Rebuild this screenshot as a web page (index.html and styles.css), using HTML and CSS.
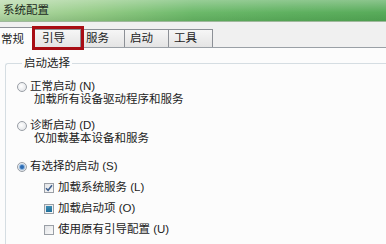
FILE: index.html
```html
<!DOCTYPE html>
<html lang="zh-CN">
<head>
  <meta charset="UTF-8">
  <title>系统配置</title>
  <link rel="stylesheet" href="styles.css">
</head>
<body>
  <div class="window">
    <header class="title-bar">系统配置</header>

    <nav class="tab-strip">
      <span class="tab tab-active">常规</span>
      <span class="tab tab-marked">引导</span>
      <span class="tab">服务</span>
      <span class="tab">启动</span>
      <span class="tab">工具</span>
    </nav>

    <div class="tab-panel">
      <fieldset class="group">
        <legend class="group-label">启动选择</legend>

        <div class="option">
          <span class="radio"></span>
          <span>正常启动 (N)</span>
        </div>
        <div class="option-note">加载所有设备驱动程序和服务</div>

        <div class="option option-gap">
          <span class="radio"></span>
          <span>诊断启动 (D)</span>
        </div>
        <div class="option-note">仅加载基本设备和服务</div>

        <div class="option option-gap-lg">
          <span class="radio radio-on"></span>
          <span>有选择的启动 (S)</span>
        </div>

        <div class="sub-options">
          <div class="check-row">
            <span class="checkbox">
              <svg viewBox="0 0 8 8" width="8" height="8"><path d="M1 4.2 L3.1 6.3 L7 1.2" fill="none" stroke="#3d5f8e" stroke-width="1.5"/></svg>
            </span>
            <span>加载系统服务 (L)</span>
          </div>
          <div class="check-row">
            <span class="checkbox checkbox-mixed"></span>
            <span>加载启动项 (O)</span>
          </div>
          <div class="check-row">
            <span class="checkbox"></span>
            <span>使用原有引导配置 (U)</span>
          </div>
        </div>
      </fieldset>
    </div>
  </div>
</body>
</html>
```

FILE: styles.css
```css
:root {
  --text: #1c1c1c;
  --tab-border: #8c9096;
  --panel-bg: #fcfcfc;
  --chrome-bg: #f0f0f0;
  --mark-red: #a80d14;
  --group-border: #d5dde2;
}

* {
  margin: 0;
  padding: 0;
  box-sizing: border-box;
}

body {
  width: 386px;
  height: 244px;
  overflow: hidden;
  background: var(--chrome-bg);
  color: var(--text);
  font-family: "Liberation Sans", "Noto Sans CJK SC", sans-serif;
  font-size: 11.5px;
  line-height: 13px;
}

.window {
  width: 386px;
  height: 244px;
  overflow: hidden;
  display: flex;
  flex-direction: column;
}

.title-bar {
  height: 22px;
  flex-shrink: 0;
  padding: 4px 0 0 3px;
  color: #1c2a1c;
  background:
    linear-gradient(to bottom, rgba(255, 255, 255, 0.3), rgba(255, 255, 255, 0) 60%, rgba(0, 60, 0, 0.12)),
    linear-gradient(to right, #b6d9a8 0%, #94cb86 25%, #6cb96a 50%, #5fb160 75%, #58ab5a 100%);
  border-bottom: 1px solid #9fb89c;
}

.tab-strip {
  display: flex;
  align-items: flex-end;
  height: 26px;
  flex-shrink: 0;
  margin-left: -6px;
  border-bottom: 1px solid #9aa0a6;
}

.tab {
  width: 44px;
  height: 18px;
  padding: 2px 0 0 5px;
  border: 1px solid var(--tab-border);
  border-bottom: none;
  border-left: none;
  background: linear-gradient(to bottom, #f6f6f6, #e4e4e4);
}

.tab-active {
  width: 41px;
  height: 21px;
  padding: 5px 0 0 6px;
  border-left: 1px solid var(--tab-border);
  background: var(--panel-bg);
  margin-bottom: -1px;
}

.tab-marked {
  width: 46px;
  padding-left: 7px;
  outline: 3px solid var(--mark-red);
  outline-offset: 0;
  position: relative;
  z-index: 1;
}

.tab-panel {
  flex: 1;
  min-height: 0;
  background: var(--panel-bg);
  padding: 9px 0 0 5px;
}

.group {
  border: 1px solid var(--group-border);
  border-right: none;
  border-bottom: none;
  border-radius: 3px 0 0 0;
  height: 100%;
  padding: 10px 0 0 11px;
}

.group-label {
  margin-left: 5px;
  padding: 0 2px;
  line-height: 13px;
}

.option {
  display: flex;
  align-items: center;
  height: 13px;
}

.option-gap {
  margin-top: 13px;
}

.option-gap-lg {
  margin-top: 15px;
}

.option-note {
  height: 13px;
  padding-left: 17px;
}

.radio {
  width: 10px;
  height: 10px;
  margin-right: 3px;
  border-radius: 50%;
  border: 1px solid #9a9fa6;
  background: radial-gradient(circle at 40% 40%, #ffffff, #dcdfe3);
  display: flex;
  align-items: center;
  justify-content: center;
}

.radio-on::after {
  content: "";
  width: 4px;
  height: 4px;
  border-radius: 50%;
  background: #2c6cb4;
  box-shadow: 0 0 1px 1px rgba(60, 130, 200, 0.6);
}

.sub-options {
  display: flex;
  flex-direction: column;
  gap: 8px;
  margin-top: 8px;
  padding-left: 27px;
}

.check-row {
  display: flex;
  align-items: center;
  height: 13px;
}

.checkbox {
  width: 10px;
  height: 10px;
  margin-right: 4px;
  border: 1px solid #9a9fa6;
  background: linear-gradient(to bottom right, #e2e4e7, #fafafa);
  display: flex;
  align-items: center;
  justify-content: center;
}

.checkbox-mixed::after {
  content: "";
  width: 6px;
  height: 6px;
  background: linear-gradient(to bottom, #3c8cb4, #1f6f9a);
}
```
